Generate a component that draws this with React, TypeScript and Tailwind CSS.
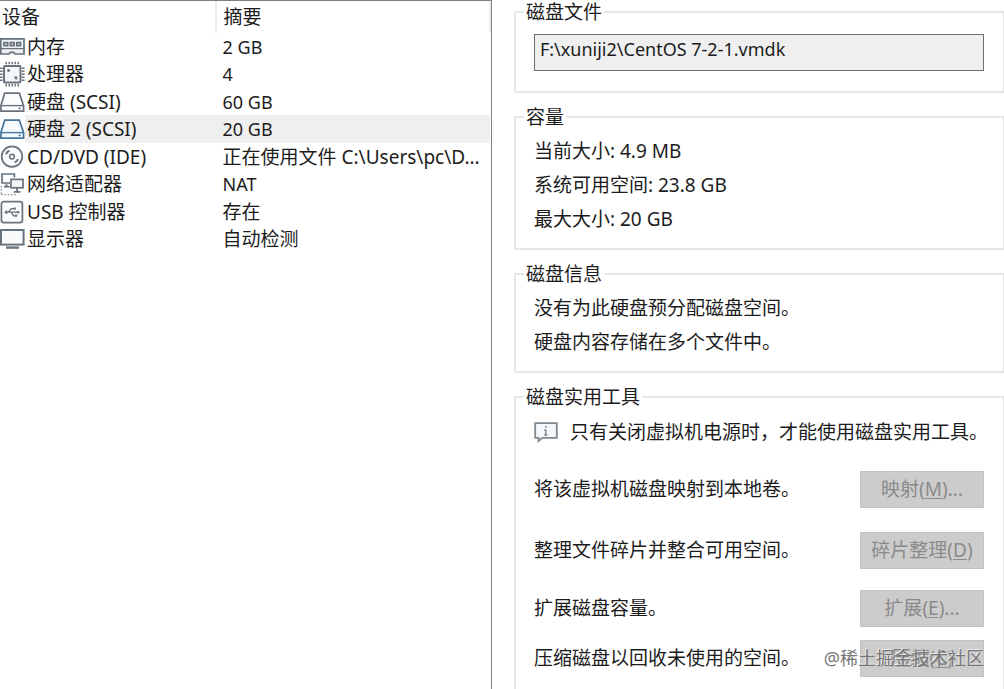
import type { ReactNode } from 'react';

function Icon({ children, color = '#68737d' }: { children: ReactNode; color?: string }) {
  return (
    <svg
      viewBox="0 0 25 26"
      className="block h-[26px] w-[25px]"
      fill="none"
      stroke={color}
      strokeWidth="1.7"
      aria-hidden="true"
    >
      {children}
    </svg>
  );
}

const MemoryIcon = () => (
  <Icon>
    <path d="M.8 4.8H24V20H15l-1.2-1.6h-3.6L9 20H.8z" fill="#eef1f4" />
    <path d="M.8 14.6H24" strokeWidth="1.2" />
    <path d="M4 8.6h3.6v3H4zM10.4 8.6H14v3h-3.6zM16.8 8.6h3.6v3h-3.6z" strokeWidth="1.8" />
  </Icon>
);

const CpuIcon = () => (
  <Icon>
    <rect x="4" y="5" width="16.5" height="16.5" rx="1" strokeWidth="2" fill="#f4f7f9" />
    <path
      d="M6.2.8v2.4M9.2.8v2.4M12.2.8v2.4M15.2.8v2.4M18.2.8v2.4M6.2 23v2.4M9.2 23v2.4M12.2 23v2.4M15.2 23v2.4M18.2 23v2.4M0 7.3h2.6M0 10.3h2.6M0 13.3h2.6M0 16.3h2.6M0 19.3h2.6M22 7.3h2.6M22 10.3h2.6M22 13.3h2.6M22 16.3h2.6M22 19.3h2.6"
      strokeWidth="1.5"
    />
    <circle cx="8.6" cy="9.6" r="1.5" fill="#68737d" stroke="none" />
    <path d="M14.3 16.5h2v2" strokeWidth="1.8" />
  </Icon>
);

const DiskIcon = ({ active = false }: { active?: boolean }) => (
  <Icon color={active ? '#44759c' : '#68737d'}>
    <path d="M.9 16.6 4.7 4.2h14.6L23.6 16.6v5.6H.9z" fill={active ? '#f5faff' : '#fbfcfd'} />
    <path d="M.9 16.6h22.7" strokeWidth="1.4" />
    <path d="M18.6 19.4h2" />
  </Icon>
);

const DiscIcon = () => (
  <Icon>
    <circle cx="12" cy="12.6" r="10.3" fill="#fbfcfd" />
    <circle cx="12" cy="12.6" r="2.4" strokeWidth="1.5" />
    <path d="M6 10.2c.6-1.8 1.6-2.8 3.4-3.4M18 15c-.6 1.8-1.6 2.8-3.4 3.4" strokeWidth="2" />
  </Icon>
);

const NetworkIcon = () => (
  <Icon>
    <path d="M10 12H2V3h12.4v3.4" />
    <path d="M6.5 12.4v3M4 15.6h5.6" />
    <rect x="11" y="8.4" width="12" height="8.4" fill="#f4f7f9" />
    <path d="M17 17v3.4M13.8 20.8h6.6" />
    <path d="M1.2 15v8.5M1.2 23.8H16" strokeWidth="1.1" strokeDasharray="1.6 1.6" />
  </Icon>
);

const UsbIcon = () => (
  <Icon>
    <rect x="1.4" y="2.6" width="21" height="21" rx="2.4" fill="#fbfcfd" />
    <path d="M5.5 13.2h13M8.6 13l2.6-3.4h2.8M11.2 13.4l2.5 3.4h2" strokeWidth="1.3" />
    <path d="M4 13.2 7.2 11v4.4z" fill="#68737d" stroke="none" />
    <circle cx="18.2" cy="13.2" r="1.3" fill="#68737d" stroke="none" />
    <path d="M13.6 8.6h2.2v2.2h-2.2zM15 15.6h2.2v2.2H15z" fill="#68737d" stroke="none" />
  </Icon>
);

const DisplayIcon = () => (
  <Icon>
    <rect x="1" y="4" width="22.6" height="14.6" strokeWidth="2" fill="#f8fafb" />
    <path d="M6 21.6h13" strokeWidth="2.4" />
  </Icon>
);

const InfoIcon = () => (
  <svg viewBox="0 0 24 22" className="h-[22px] w-6 shrink-0" fill="none" stroke="#7f898f" strokeWidth="1.8" aria-hidden="true">
    <path d="M1.2 2.2h21.6v14.6H8.4L4.6 20v-3.2H1.2z" fill="#f4f8fa" />
    <path d="M11.8 5v2M11.8 8.6v5.4M10.2 9h1.6M10.2 14h3.2" strokeWidth="1.4" />
  </svg>
);

const devices = [
  { name: '内存', summary: '2 GB', icon: <MemoryIcon /> },
  { name: '处理器', summary: '4', icon: <CpuIcon /> },
  { name: '硬盘 (SCSI)', summary: '60 GB', icon: <DiskIcon /> },
  { name: '硬盘 2 (SCSI)', summary: '20 GB', icon: <DiskIcon active />, selected: true },
  { name: 'CD/DVD (IDE)', summary: '正在使用文件 C:\\Users\\pc\\D...', icon: <DiscIcon /> },
  { name: '网络适配器', summary: 'NAT', icon: <NetworkIcon /> },
  { name: 'USB 控制器', summary: '存在', icon: <UsbIcon /> },
  { name: '显示器', summary: '自动检测', icon: <DisplayIcon /> },
];

const isLatin = (text: string) => /^[\x20-\x7e]+$/.test(text);

function Group({ title, last = false, children }: { title: string; last?: boolean; children: ReactNode }) {
  return (
    <fieldset
      className={`min-w-0 border-2 border-r border-[#e6e6e6] px-2 ${last ? 'flex-1 border-b-0' : ''}`}
    >
      <legend className="px-0.5 leading-6">{title}</legend>
      <div className="pt-[5px] pr-[11px] pb-3 pl-[10px]">{children}</div>
    </fieldset>
  );
}

function Tool({ text, label, hotkey, tail = '', gap }: { text: string; label: string; hotkey: string; tail?: string; gap: string }) {
  return (
    <div className={`flex items-center justify-between ${gap}`}>
      <span>{text}</span>
      <button
        type="button"
        disabled
        aria-label={`${label}(${hotkey})`}
        className="h-[37px] w-[124px] shrink-0 border border-[#c2c2c2] bg-[#cccccc] text-[#8a8a8a]"
      >
        {label}(<u className="underline-offset-2">{hotkey}</u>){tail}
      </button>
    </div>
  );
}

export default function App() {
  return (
    <main className="relative flex h-screen overflow-hidden bg-white font-['Noto_Sans','Noto_Sans_CJK_SC',sans-serif] text-[19px] whitespace-nowrap text-[#1c1c1c]">
      <section className="w-[49%] shrink-0 border-t border-r border-[#808080]">
        <table className="w-full table-fixed border-collapse text-left leading-[26px]">
          <thead>
            <tr className="h-8">
              <th className="w-[44%] border-r-2 border-[#ececec] p-0 pl-0.5 font-normal">设备</th>
              <th className="border-r-2 border-[#ececec] p-0 pl-[7px] font-normal">摘要</th>
            </tr>
          </thead>
          <tbody>
            {devices.map((d) => (
              <tr key={d.name} className="h-[27px] even:h-7">
                <td className="p-0">
                  <div className="flex items-center">
                    {d.icon}
                    <span className={`flex-1 pl-0.5 ${d.selected ? 'bg-[#efefef] leading-7' : ''}`}>{d.name}</span>
                  </div>
                </td>
                <td className={`p-0 pl-[7px] ${isLatin(d.summary) ? 'text-[18px]' : ''} ${d.selected ? 'bg-[#efefef]' : ''}`}>
                  {d.summary}
                </td>
              </tr>
            ))}
          </tbody>
        </table>
      </section>

      <section className="flex min-w-0 flex-1 flex-col gap-3 pl-[22px]">
        <Group title="磁盘文件">
          <input
            type="text"
            readOnly
            aria-label="磁盘文件"
            value={'F:\\xuniji2\\CentOS 7-2-1.vmdk'}
            className="mt-[5px] mb-2 block h-[37px] w-full border border-[#6f6f6f] bg-[#efefef] px-[5px] pb-2 text-[18px] outline-none"
          />
        </Group>

        <Group title="容量">
          <div className="leading-[34px]">
            <p>当前大小: 4.9 MB</p>
            <p>系统可用空间: 23.8 GB</p>
            <p>最大大小: 20 GB</p>
          </div>
        </Group>

        <Group title="磁盘信息">
          <div className="leading-[34px]">
            <p>没有为此硬盘预分配磁盘空间。</p>
            <p>硬盘内容存储在多个文件中。</p>
          </div>
        </Group>

        <Group title="磁盘实用工具" last>
          <p className="flex items-center gap-3 leading-9">
            <InfoIcon />
            只有关闭虚拟机电源时，才能使用磁盘实用工具。
          </p>
          <Tool text="将该虚拟机磁盘映射到本地卷。" label="映射" hotkey="M" tail="..." gap="mt-[21px]" />
          <Tool text="整理文件碎片并整合可用空间。" label="碎片整理" hotkey="D" gap="mt-6" />
          <Tool text="扩展磁盘容量。" label="扩展" hotkey="E" tail="..." gap="mt-[21px]" />
          <Tool text="压缩磁盘以回收未使用的空间。" label="压缩" hotkey="C" gap="mt-[13px]" />
        </Group>
      </section>

      <span className="pointer-events-none absolute right-5 bottom-[19px] text-[18px] leading-6 text-[#777777] [text-shadow:-1px_-1px_0_#ffffff99]">
        @稀土掘金技术社区
      </span>
    </main>
  );
}
